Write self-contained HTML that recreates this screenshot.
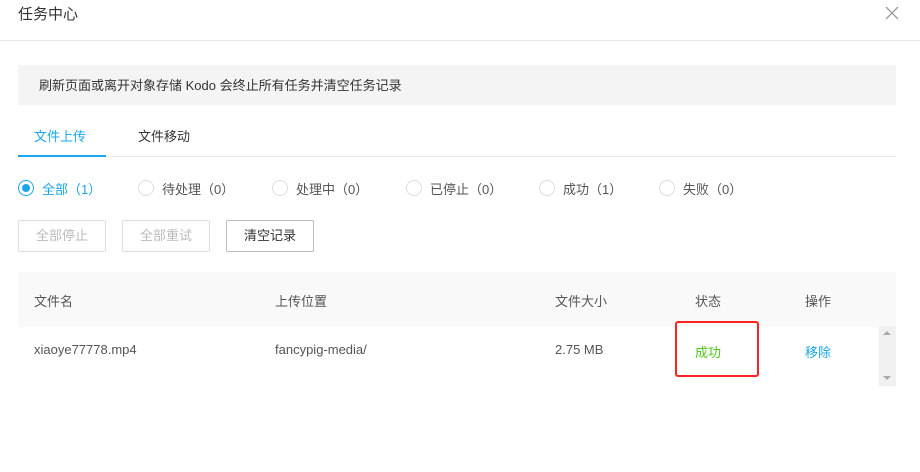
<html><head><style>
body{margin:0;width:920px;height:472px;background:#fff;font-family:"Liberation Sans","Noto Sans CJK SC",sans-serif;font-size:13px;color:#333;position:relative;overflow:hidden}
.a{position:absolute}
.btn{position:absolute;top:220px;height:32px;border:1px solid #ddd;border-radius:2px;line-height:30px;text-align:center;color:#bbb;font-size:13px;box-sizing:border-box}
.r{position:absolute;top:180px;width:14px;height:14px;border:1px solid #ddd;border-radius:50%}
.rl{position:absolute;top:179px;color:#555}
</style></head><body>
<div class="a" style="left:18px;top:3px;font-size:15px;color:#333">任务中心</div>
<svg class="a" style="left:885px;top:6px" width="14" height="14"><path d="M1 1L13 13M13 1L1 13" stroke="#999" stroke-width="1.3"/></svg>
<div class="a" style="left:0;top:40px;width:920px;height:1px;background:#e8e8e8"></div>
<div class="a" style="left:18px;top:65px;width:878px;height:40px;background:#f4f4f4"></div>
<div class="a" style="left:39px;top:75px;color:#333">刷新页面或离开对象存储 Kodo 会终止所有任务并清空任务记录</div>
<div class="a" style="left:34px;top:126px;color:#1aa6e8">文件上传</div>
<div class="a" style="left:138px;top:126px;color:#333">文件移动</div>
<div class="a" style="left:18px;top:156px;width:878px;height:1px;background:#e8e8e8"></div>
<div class="a" style="left:18px;top:155px;width:88px;height:2px;background:#1aa6e8"></div>
<div class="r" style="left:18px;border-color:#1aa6e8"><div class="a" style="left:3px;top:3px;width:8px;height:8px;border-radius:50%;background:#1aa6e8"></div></div>
<div class="rl" style="left:42px;color:#1aa6e8">全部（1）</div>
<div class="r" style="left:138px"></div><div class="rl" style="left:162px">待处理（0）</div>
<div class="r" style="left:272px"></div><div class="rl" style="left:296px">处理中（0）</div>
<div class="r" style="left:406px"></div><div class="rl" style="left:430px">已停止（0）</div>
<div class="r" style="left:539px"></div><div class="rl" style="left:563px">成功（1）</div>
<div class="r" style="left:659px"></div><div class="rl" style="left:683px">失败（0）</div>
<div class="btn" style="left:18px;width:88px">全部停止</div>
<div class="btn" style="left:122px;width:88px">全部重试</div>
<div class="btn" style="left:226px;width:88px;border-color:#bbb;color:#333">清空记录</div>
<div class="a" style="left:18px;top:272px;width:878px;height:55px;background:#f9f9f9"></div>
<div class="a" style="left:34px;top:291px;color:#555">文件名</div>
<div class="a" style="left:275px;top:291px;color:#555">上传位置</div>
<div class="a" style="left:555px;top:291px;color:#555">文件大小</div>
<div class="a" style="left:695px;top:291px;color:#555">状态</div>
<div class="a" style="left:805px;top:291px;color:#555">操作</div>
<div class="a" style="left:34px;top:342px;color:#555">xiaoye77778.mp4</div>
<div class="a" style="left:275px;top:342px;color:#555">fancypig-media/</div>
<div class="a" style="left:555px;top:342px;color:#555">2.75 MB</div>
<div class="a" style="left:695px;top:342px;color:#52c41a">成功</div>
<div class="a" style="left:805px;top:342px;color:#1aa6e8">移除</div>
<div class="a" style="left:675px;top:321px;width:80px;height:52px;border:2px solid #f22;border-radius:3px"></div>
<div class="a" style="left:879px;top:326px;width:17px;height:60px;background:#f0f0f0"></div>
<div class="a" style="left:883px;top:331px;width:0;height:0;border-left:4px solid transparent;border-right:4px solid transparent;border-bottom:4px solid #aaa"></div>
<div class="a" style="left:883px;top:376px;width:0;height:0;border-left:4px solid transparent;border-right:4px solid transparent;border-top:4px solid #aaa"></div>
</body></html>
